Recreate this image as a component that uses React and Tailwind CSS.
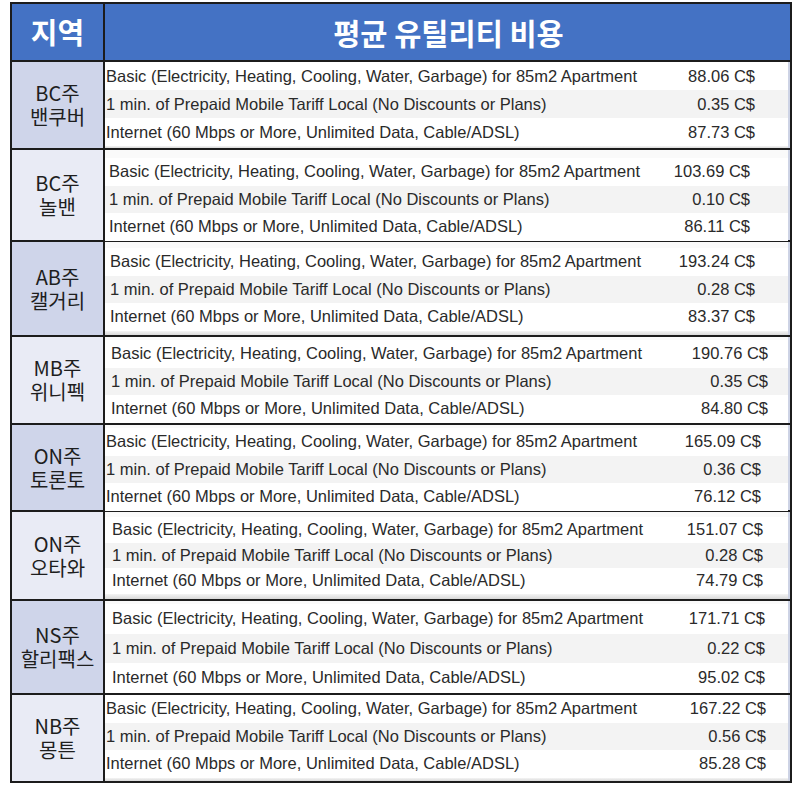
import React from "react";

const DESC = [
  "Basic (Electricity, Heating, Cooling, Water, Garbage) for 85m2 Apartment",
  "1 min. of Prepaid Mobile Tariff Local (No Discounts or Plans)",
  "Internet (60 Mbps or More, Unlimited Data, Cable/ADSL)",
];

const rows = [
  { a: "BC주", b: "밴쿠버", dark: true, h: "h-[88px]", pt: "pt-0", sh: "h-[28px]", pl: "pl-[1px]", pr: "pr-[33px]", v: ["88.06 C$", "0.35 C$", "87.73 C$"] },
  { a: "BC주", b: "놀밴", dark: false, h: "h-[92px]", pt: "pt-[8px]", sh: "h-[27.5px]", pl: "pl-[4px]", pr: "pr-[38px]", v: ["103.69 C$", "0.10 C$", "86.11 C$"] },
  { a: "AB주", b: "캘거리", dark: true, h: "h-[95px]", pt: "pt-[6px]", sh: "h-[27.5px]", pl: "pl-[5px]", pr: "pr-[33px]", v: ["193.24 C$", "0.28 C$", "83.37 C$"] },
  { a: "MB주", b: "위니펙", dark: false, h: "h-[88px]", pt: "pt-[3px]", sh: "h-[27.5px]", pl: "pl-[6px]", pr: "pr-[20px]", v: ["190.76 C$", "0.35 C$", "84.80 C$"] },
  { a: "ON주", b: "토론토", dark: true, h: "h-[87px]", pt: "pt-[3px]", sh: "h-[27.5px]", pl: "pl-[1px]", pr: "pr-[27px]", v: ["165.09 C$", "0.36 C$", "76.12 C$"] },
  { a: "ON주", b: "오타와", dark: false, h: "h-[89px]", pt: "pt-[5px]", sh: "h-[25.5px]", pl: "pl-[7px]", pr: "pr-[25px]", v: ["151.07 C$", "0.28 C$", "74.79 C$"] },
  { a: "NS주", b: "할리팩스", dark: true, h: "h-[94px]", pt: "pt-[3px]", sh: "h-[29.5px]", pl: "pl-[7px]", pr: "pr-[23px]", v: ["171.71 C$", "0.22 C$", "95.02 C$"] },
  { a: "NB주", b: "몽튼", dark: false, h: "h-[86px]", pt: "pt-0", sh: "h-[27.5px]", pl: "pl-[1px]", pr: "pr-[22px]", v: ["167.22 C$", "0.56 C$", "85.28 C$"] },
];

export default function App() {
  return (
    <div className="w-[800px] h-[787px] bg-white pt-[2px] pl-[10px]">
      <div className="w-[782px] border-2 border-[#1c1c1c] flex flex-col">
        <div className="flex h-[58px] bg-[#4472c4] border-b-2 border-[#1c1c1c]">
          <div className="w-[93px] shrink-0 border-r-2 border-[#1c1c1c] flex items-center justify-center text-white font-bold text-[29px] [font-family:'Noto_Sans_CJK_KR',sans-serif]">
            지역
          </div>
          <div className="flex-1 flex items-center justify-center pl-[2px] text-white font-bold text-[29.5px] [font-family:'Noto_Sans_CJK_KR',sans-serif]">
            평균 유틸리티 비용
          </div>
        </div>
        {rows.map((r, i) => (
          <div
            key={i}
            className={`flex ${r.h} ${i < rows.length - 1 ? "border-b-2 border-[#1c1c1c]" : ""}`}
          >
            <div
              className={`w-[93px] shrink-0 border-r-2 border-[#1c1c1c] flex flex-col items-center justify-center text-[20px] leading-[24px] text-[#1e1e1e] [font-family:'Noto_Sans_CJK_KR',sans-serif] ${r.dark ? "bg-[#cfd5ea]" : "bg-[#e9ebf5]"}`}
            >
              <div>{r.a}</div>
              <div>{r.b}</div>
            </div>
            <div className={`flex-1 flex flex-col bg-[#fafafa] border-r-2 border-[#cdd3e5] ${r.pt}`}>
              {DESC.map((d, j) => (
                <div
                  key={j}
                  className={`${r.sh} shrink-0 flex items-center justify-between ${r.pl} ${r.pr} text-[16.5px] text-[#2a2a2a] [font-family:'Liberation_Sans',Arial,sans-serif] ${j === 1 ? "bg-[#f3f3f3]" : "bg-white"}`}
                >
                  <span className="whitespace-nowrap">{d}</span>
                  <span className="whitespace-nowrap">{r.v[j]}</span>
                </div>
              ))}
              <div className="flex-1 bg-gradient-to-b from-[#f4f4f4] to-[#d9d9d9]" />
            </div>
          </div>
        ))}
      </div>
    </div>
  );
}
